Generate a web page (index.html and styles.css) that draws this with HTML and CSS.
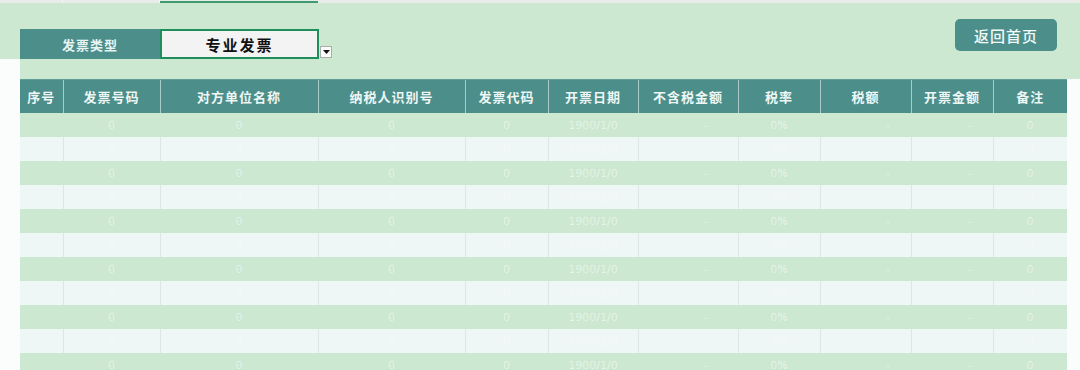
FILE: index.html
```html
<!DOCTYPE html>
<html lang="zh">
<head>
<meta charset="utf-8">
<title>发票列表</title>
<link rel="stylesheet" href="styles.css">
</head>
<body>
<div class="topline">
  <span class="tl-a"></span><span class="tl-b"></span><span class="tl-sel"></span><span class="tl-rest"></span>
</div>
<div class="band">
  <div class="filter">
    <div class="filter-label">发票类型</div>
    <div class="filter-select">专业发票</div>
    <div class="drop"><svg width="7" height="4" viewBox="0 0 7 4"><path d="M0 0H7L3.5 4Z" fill="#111"/></svg></div>
  </div>
  <button class="home-btn">返回首页</button>
</div>
<div class="band-low"></div>
<table class="grid">
  <colgroup>
    <col style="width:43px"><col style="width:97px"><col style="width:158px"><col style="width:147px"><col style="width:83px"><col style="width:90px"><col style="width:100px"><col style="width:82px"><col style="width:91px"><col style="width:82px"><col style="width:74px">
  </colgroup>
  <thead>
    <tr><th>序号</th><th>发票号码</th><th>对方单位名称</th><th>纳税人识别号</th><th>发票代码</th><th>开票日期</th><th>不含税金额</th><th>税率</th><th>税额</th><th>开票金额</th><th>备注</th></tr>
  </thead>
  <tbody>
    <tr class="g"><td></td><td>0</td><td>0</td><td>0</td><td>0</td><td>1900/1/0</td><td class="a1">-</td><td>0%</td><td class="a2">-</td><td class="a2">-</td><td>0</td></tr>
    <tr class="l"><td></td><td>0</td><td>0</td><td>0</td><td>0</td><td>1900/1/0</td><td class="a1">-</td><td>0%</td><td class="a2">-</td><td class="a2">-</td><td>0</td></tr>
    <tr class="g"><td></td><td>0</td><td>0</td><td>0</td><td>0</td><td>1900/1/0</td><td class="a1">-</td><td>0%</td><td class="a2">-</td><td class="a2">-</td><td>0</td></tr>
    <tr class="l"><td></td><td>0</td><td>0</td><td>0</td><td>0</td><td>1900/1/0</td><td class="a1">-</td><td>0%</td><td class="a2">-</td><td class="a2">-</td><td>0</td></tr>
    <tr class="g"><td></td><td>0</td><td>0</td><td>0</td><td>0</td><td>1900/1/0</td><td class="a1">-</td><td>0%</td><td class="a2">-</td><td class="a2">-</td><td>0</td></tr>
    <tr class="l"><td></td><td>0</td><td>0</td><td>0</td><td>0</td><td>1900/1/0</td><td class="a1">-</td><td>0%</td><td class="a2">-</td><td class="a2">-</td><td>0</td></tr>
    <tr class="g"><td></td><td>0</td><td>0</td><td>0</td><td>0</td><td>1900/1/0</td><td class="a1">-</td><td>0%</td><td class="a2">-</td><td class="a2">-</td><td>0</td></tr>
    <tr class="l"><td></td><td>0</td><td>0</td><td>0</td><td>0</td><td>1900/1/0</td><td class="a1">-</td><td>0%</td><td class="a2">-</td><td class="a2">-</td><td>0</td></tr>
    <tr class="g"><td></td><td>0</td><td>0</td><td>0</td><td>0</td><td>1900/1/0</td><td class="a1">-</td><td>0%</td><td class="a2">-</td><td class="a2">-</td><td>0</td></tr>
    <tr class="l"><td></td><td>0</td><td>0</td><td>0</td><td>0</td><td>1900/1/0</td><td class="a1">-</td><td>0%</td><td class="a2">-</td><td class="a2">-</td><td>0</td></tr>
    <tr class="g"><td></td><td>0</td><td>0</td><td>0</td><td>0</td><td>1900/1/0</td><td class="a1">-</td><td>0%</td><td class="a2">-</td><td class="a2">-</td><td>0</td></tr>
  </tbody>
</table>
</body>
</html>
```
FILE: styles.css
```css
html, body {
  margin: 0;
  padding: 0;
  background: #fbfdfc;
  font-family: "Noto Sans CJK SC", "Noto Sans", sans-serif;
}

.topline {
  display: flex;
  height: 3px;
  background: #e9ebe9;
}
.topline span { display: block; height: 3px; }
.tl-a { width: 63px; border-right: 1px solid #f6f6f6; box-sizing: border-box; }
.tl-b { width: 97px; border-right: 1px solid #f6f6f6; box-sizing: border-box; }
.tl-sel { width: 158px; border-bottom: 2px solid #3f9a70; box-sizing: border-box; }
.tl-rest { flex: 1; }

.band {
  display: flex;
  justify-content: space-between;
  height: 56px;
  padding: 0 23px 0 20px;
  background: #cce8d1;
}

.filter {
  display: flex;
  align-self: flex-end;
  align-items: flex-end;
}
.filter-label {
  width: 140px;
  height: 30px;
  background: #4b8e8a;
  color: #e8f4f2;
  font-size: 13px;
  font-weight: 700;
  letter-spacing: 1px;
  display: flex;
  align-items: center;
  justify-content: center;
}
.filter-select {
  width: 159px;
  height: 30px;
  box-sizing: border-box;
  border: 2px solid #1f8e5b;
  background: #f2f3f2;
  color: #111;
  font-size: 15px;
  font-weight: 700;
  letter-spacing: 2px;
  display: flex;
  align-items: center;
  justify-content: center;
}
.drop {
  width: 12px;
  height: 12px;
  margin-left: 1px;
  margin-bottom: 1px;
  box-sizing: border-box;
  border: 1px solid #a8b0ad;
  background: #fbfbfb;
  display: flex;
  align-items: center;
  justify-content: center;
}

.home-btn {
  align-self: flex-start;
  margin-top: 16px;
  width: 102px;
  height: 32px;
  border: none;
  border-radius: 5px;
  background: #4b8e8a;
  color: #f2faf8;
  font-family: inherit;
  font-size: 15px;
  font-weight: 500;
  letter-spacing: 1px;
  padding: 0;
}

.band-low {
  height: 20px;
  margin-left: 20px;
  background: #cce8d1;
}

.grid {
  margin-left: 20px;
  width: 1047px;
  table-layout: fixed;
  border-collapse: collapse;
}
.grid th {
  height: 33px;
  padding: 0;
  background: #4b8e8a;
  color: #eef7f5;
  font-size: 13px;
  font-weight: 700;
  letter-spacing: 1px;
  border-left: 1px solid #a9ccc8;
  border-top: 1px solid #5f9e99;
}
.grid th:first-child { border-left: none; }
.grid td {
  height: 24px;
  padding: 0;
  text-align: center;
  font-size: 11px;
  font-weight: 300;
  font-family: "DejaVu Sans", sans-serif;
  color: #f4faf5;
}
.grid tr.g td { background: #cce8d0; }
.grid tr.l td {
  background: #eef7f6;
  color: #f7fbfa;
  border-left: 1px solid #dbe7e5;
}
.grid tr.l td:first-child { border-left: none; }
.grid td.a1 { text-align: right; padding-right: 30px; }
.grid td.a2 { text-align: right; padding-right: 21px; }
```
